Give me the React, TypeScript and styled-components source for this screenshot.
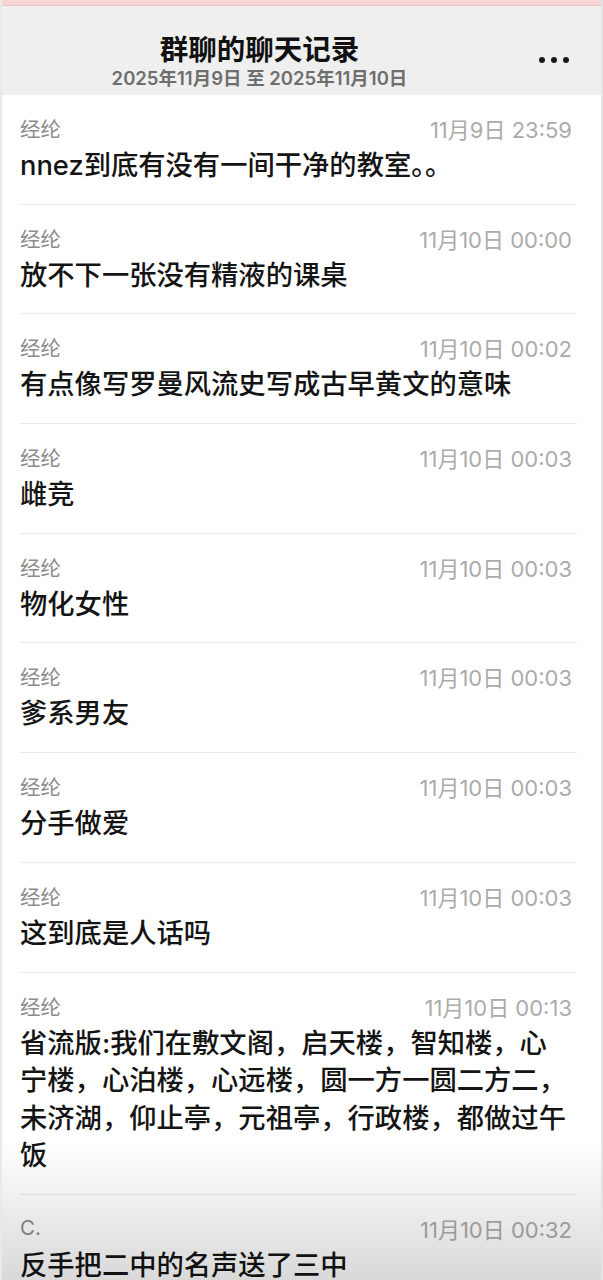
import React from 'react';
import styled, { createGlobalStyle } from 'styled-components';

const GlobalStyle = createGlobalStyle`
  html, body {
    margin: 0;
    padding: 0;
    background: #ffffff;
  }
  body {
    font-family: Inter, "Noto Sans CJK SC", "Noto Sans", sans-serif;
    -webkit-font-smoothing: antialiased;
  }
`;

const Page = styled.div`
  width: 603px;
  height: 1280px;
  overflow: hidden;
  position: relative;
  display: flex;
  flex-direction: column;
  background: #ffffff;
  border-left: 2px solid #e9e9e9;
  border-right: 2px solid #e4e4e4;
  box-sizing: border-box;
`;

const TopStrip = styled.div`
  height: 5px;
  flex-shrink: 0;
  background: #f7d4d4;
  border-bottom: 1px solid #ecc4c4;
`;

const Header = styled.header`
  height: 89px;
  box-sizing: border-box;
  flex-shrink: 0;
  background: #efefef;
  display: flex;
  align-items: flex-start;
  padding: 27px 32px 0 0;
`;

const HeaderText = styled.div`
  flex: 1;
  display: flex;
  flex-direction: column;
  align-items: center;
  padding-right: 22px;
`;

const Title = styled.h1`
  margin: 0;
  font-size: 28.5px;
  line-height: 34px;
  font-weight: 700;
  color: #111111;
`;

const Subtitle = styled.div`
  font-size: 18.5px;
  line-height: 22px;
  font-weight: 600;
  color: #6e6e6e;
`;

const MoreButton = styled.div`
  display: flex;
  gap: 6px;
  margin-top: 24px;
`;

const Dot = styled.span`
  width: 6px;
  height: 6px;
  border-radius: 50%;
  background: #1a1a1a;
`;

const List = styled.div`
  display: flex;
  flex-direction: column;
  padding: 0 24px 0 18px;
`;

const Row = styled.div`
  padding: 21px 0 19.2px 0;
  border-bottom: 1px solid #ececec;
`;

const Meta = styled.div`
  display: flex;
  justify-content: space-between;
  align-items: center;
  height: 24px;
  margin-bottom: 7px;
  padding-right: 5px;
`;

const Name = styled.span`
  font-size: 20.5px;
  color: #8c8c8c;
`;

const Time = styled.span`
  font-size: 22px;
  color: #ababab;
`;

const Text = styled.div`
  font-size: 27.3px;
  line-height: 37.5px;
  font-weight: 500;
  color: #141414;
  padding-right: 6px;
`;

const BottomShade = styled.div`
  position: absolute;
  left: 0;
  right: 0;
  bottom: 0;
  height: 140px;
  pointer-events: none;
  background: linear-gradient(to bottom, rgba(0, 0, 0, 0), rgba(0, 0, 0, 0.15));
`;

const messages = [
  { name: '经纶', time: '11月9日 23:59', text: 'nnez到底有没有一间干净的教室。。' },
  { name: '经纶', time: '11月10日 00:00', text: '放不下一张没有精液的课桌' },
  { name: '经纶', time: '11月10日 00:02', text: '有点像写罗曼风流史写成古早黄文的意味' },
  { name: '经纶', time: '11月10日 00:03', text: '雌竞' },
  { name: '经纶', time: '11月10日 00:03', text: '物化女性' },
  { name: '经纶', time: '11月10日 00:03', text: '爹系男友' },
  { name: '经纶', time: '11月10日 00:03', text: '分手做爱' },
  { name: '经纶', time: '11月10日 00:03', text: '这到底是人话吗' },
  {
    name: '经纶',
    time: '11月10日 00:13',
    text: '省流版:我们在敷文阁，启天楼，智知楼，心宁楼，心泊楼，心远楼，圆一方一圆二方二，未济湖，仰止亭，元祖亭，行政楼，都做过午饭',
  },
  { name: 'C.', time: '11月10日 00:32', text: '反手把二中的名声送了三中' },
];

export default function App() {
  return (
    <>
      <GlobalStyle />
      <Page>
        <TopStrip />
        <Header>
          <HeaderText>
            <Title>群聊的聊天记录</Title>
            <Subtitle>2025年11月9日 至 2025年11月10日</Subtitle>
          </HeaderText>
          <MoreButton>
            <Dot />
            <Dot />
            <Dot />
          </MoreButton>
        </Header>
        <List>
          {messages.map((m, i) => (
            <Row key={i}>
              <Meta>
                <Name>{m.name}</Name>
                <Time>{m.time}</Time>
              </Meta>
              <Text>{m.text}</Text>
            </Row>
          ))}
        </List>
        <BottomShade />
      </Page>
    </>
  );
}
